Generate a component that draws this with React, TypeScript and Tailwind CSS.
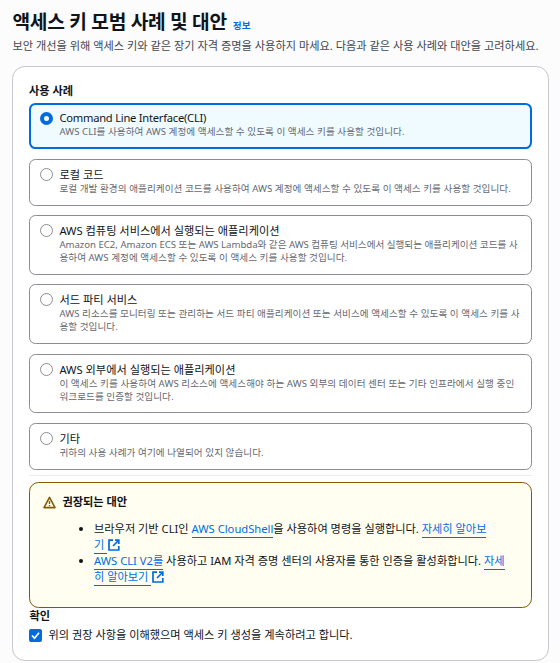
import type { ReactNode } from 'react';

type UseCase = {
  title: string;
  titleClass: string;
  lines: { text: string; spacing: string }[];
  box: string;
};

const useCases: UseCase[] = [
  {
    title: 'Command Line Interface(CLI)',
    titleClass: 'tracking-[-0.25px]',
    lines: [
      {
        text: 'AWS CLI를 사용하여 AWS 계정에 액세스할 수 있도록 이 액세스 키를 사용할 것입니다.',
        spacing: 'tracking-[0.05px]',
      },
    ],
    box: 'h-[46px]',
  },
  {
    title: '로컬 코드',
    titleClass: 'tracking-normal',
    lines: [
      {
        text: '로컬 개발 환경의 애플리케이션 코드를 사용하여 AWS 계정에 액세스할 수 있도록 이 액세스 키를 사용할 것입니다.',
        spacing: 'tracking-[0.05px]',
      },
    ],
    box: 'mt-[10px] h-[47px]',
  },
  {
    title: 'AWS 컴퓨팅 서비스에서 실행되는 애플리케이션',
    titleClass: 'tracking-normal',
    lines: [
      {
        text: 'Amazon EC2, Amazon ECS 또는 AWS Lambda와 같은 AWS 컴퓨팅 서비스에서 실행되는 애플리케이션 코드를 사',
        spacing: 'tracking-[-0.015px]',
      },
      {
        text: '용하여 AWS 계정에 액세스할 수 있도록 이 액세스 키를 사용할 것입니다.',
        spacing: 'tracking-[0.05px]',
      },
    ],
    box: 'mt-[9px] h-[60px]',
  },
  {
    title: '서드 파티 서비스',
    titleClass: 'tracking-normal',
    lines: [
      {
        text: 'AWS 리소스를 모니터링 또는 관리하는 서드 파티 애플리케이션 또는 서비스에 액세스할 수 있도록 이 액세스 키를 사',
        spacing: 'tracking-[0.05px]',
      },
      { text: '용할 것입니다.', spacing: 'tracking-[0.05px]' },
    ],
    box: 'mt-[9px] h-[60px]',
  },
  {
    title: 'AWS 외부에서 실행되는 애플리케이션',
    titleClass: 'tracking-normal',
    lines: [
      {
        text: '이 액세스 키를 사용하여 AWS 리소스에 액세스해야 하는 AWS 외부의 데이터 센터 또는 기타 인프라에서 실행 중인',
        spacing: 'tracking-[0.07px]',
      },
      { text: '워크로드를 인증할 것입니다.', spacing: 'tracking-[0.05px]' },
    ],
    box: 'mt-[10px] h-[59px]',
  },
  {
    title: '기타',
    titleClass: 'tracking-normal',
    lines: [{ text: '귀하의 사용 사례가 여기에 나열되어 있지 않습니다.', spacing: 'tracking-[0.05px]' }],
    box: 'mt-[10px] h-[47px]',
  },
];

function Tile({ item, selected }: { item: UseCase; selected: boolean }) {
  return (
    <label
      className={`flex shrink-0 rounded-[6.4px] ${item.box} ${
        selected
          ? 'border-2 border-[#006ce0] bg-[#f0fbff] pt-[5px] pl-[9px]'
          : 'border border-[#8c8c94] bg-white pt-[7px] pl-[10px]'
      }`}
    >
      <span
        className={`size-[13px] shrink-0 rounded-full bg-white ${
          selected ? 'mt-[2px] border-4 border-[#006ce0]' : 'mt-px border border-[#8c8c94]'
        }`}
      />
      <span className="ml-[6.4px] flex flex-col whitespace-nowrap">
        <span className={`text-[11.2px] leading-[16px] text-[#0f141a] ${item.titleClass}`}>{item.title}</span>
        {item.lines.map((line) => (
          <span key={line.text} className={`text-[9.6px] leading-[12.8px] text-[#656871] ${line.spacing}`}>
            {line.text}
          </span>
        ))}
      </span>
    </label>
  );
}

function Link({ children }: { children: ReactNode }) {
  return <a className="border-b border-[#006ce0] pb-px text-[#006ce0]">{children}</a>;
}

function ExternalIcon() {
  return (
    <svg viewBox="0 0 12 12" className="ml-px inline-block size-3 align-[-2px]" fill="none" stroke="#006ce0" strokeWidth="1.7">
      <path d="M5 1.2H1v9.8h9.8V7" />
      <path d="M7 1.2h3.8V5" />
      <path d="M5 7l5.5-5.5" />
    </svg>
  );
}

export default function App() {
  return (
    <div className="flex h-[663px] w-[560px] flex-col overflow-hidden bg-[#fcfcfd] pl-3 font-['Noto_Sans','Noto_Sans_CJK_KR',sans-serif] text-[11.2px] leading-[16px] text-[#0f141a]">
      <header className="h-[66px] shrink-0 pl-[0.5px] pt-[10px] whitespace-nowrap">
        <div className="flex h-6 items-baseline">
          <h1 className="text-[19.2px] leading-6 font-bold tracking-[-0.3px]">액세스 키 모범 사례 및 대안</h1>
          <a className="ml-[6px] text-[9.6px] font-bold text-[#006ce0]">정보</a>
        </div>
        <p className="mt-[4px] text-[#424650]">
          보안 개선을 위해 액세스 키와 같은 장기 자격 증명을 사용하지 마세요. 다음과 같은 사용 사례와 대안을 고려하세요.
        </p>
      </header>

      <main className="flex h-[595px] w-[537px] shrink-0 flex-col rounded-[12.8px] border border-[#c6c6cd] bg-white px-4 pt-4">
        <h2 className="h-5 shrink-0 font-bold">사용 사례</h2>
        {useCases.map((item, index) => (
          <Tile key={item.title} item={item} selected={index === 0} />
        ))}
        <hr className="mt-[5px] shrink-0 border-[#ebebf0]" />
        <section className="mt-[6px] flex h-[126px] shrink-0 flex-col rounded-[9.6px] border border-[#855900] bg-[#fffef0] pt-[11px] pl-[13px]">
          <h3 className="flex items-center gap-[6.4px] font-bold">
            <svg viewBox="0 0 13 13" className="size-[13px]" fill="none" stroke="#855900" strokeLinejoin="round">
              <path d="M6.5 1.4l5.5 10.2H1L6.5 1.4z" strokeWidth="1.6" />
              <path d="M6.5 5v3M6.5 8.9v1.3" strokeWidth="1.4" />
            </svg>
            권장되는 대안
          </h3>
          <ul className="mt-[11px] list-disc pl-[51px] whitespace-nowrap">
            <li>
              브라우저 기반 CLI인 <Link>AWS CloudShell</Link>을 사용하여 명령을 실행합니다. <Link>자세히 알아보</Link>
              <br />
              <Link>기&nbsp;</Link>
              <ExternalIcon />
            </li>
            <li>
              <Link>AWS CLI V2를</Link> 사용하고 IAM 자격 증명 센터의 사용자를 통한 인증을 활성화합니다. <Link>자세</Link>
              <br />
              <Link>히 알아보기&nbsp;</Link>
              <ExternalIcon />
            </li>
          </ul>
        </section>
        <h2 className="h-[18px] shrink-0 pl-[0.5px] font-bold">확인</h2>
        <label className="mt-px flex items-center gap-[6.4px] whitespace-nowrap">
          <span className="flex size-[13px] items-center justify-center rounded-[2px] bg-[#006ce0]">
            <svg viewBox="0 0 13 13" className="size-[13px]" fill="none" stroke="white" strokeWidth="1.7">
              <path d="M3 6.5l2.5 2.7L10 3.7" />
            </svg>
          </span>
          위의 권장 사항을 이해했으며 액세스 키 생성을 계속하려고 합니다.
        </label>
      </main>
    </div>
  );
}
